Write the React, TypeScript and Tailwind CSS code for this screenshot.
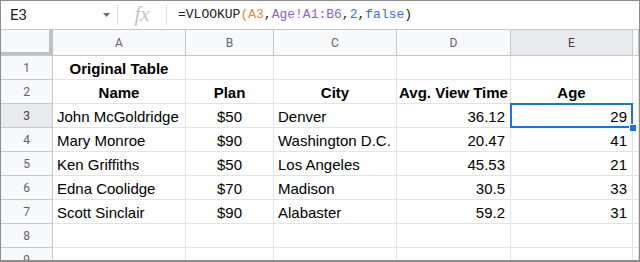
import React from "react";

const cols = [
  { key: "A", w: "w-[133px]" },
  { key: "B", w: "w-[88px]" },
  { key: "C", w: "w-[123px]" },
  { key: "D", w: "w-[114px]" },
  { key: "E", w: "w-[122px]" },
];

type Cell = { text: string; align?: "left" | "center" | "right"; bold?: boolean };

const rows: Cell[][] = [
  [{ text: "Original Table", align: "center", bold: true }, { text: "" }, { text: "" }, { text: "" }, { text: "" }],
  [
    { text: "Name", align: "center", bold: true },
    { text: "Plan", align: "center", bold: true },
    { text: "City", align: "center", bold: true },
    { text: "Avg. View Time", align: "center", bold: true },
    { text: "Age", align: "center", bold: true },
  ],
  [
    { text: "John McGoldridge" },
    { text: "$50", align: "center" },
    { text: "Denver" },
    { text: "36.12", align: "right" },
    { text: "29", align: "right" },
  ],
  [
    { text: "Mary Monroe" },
    { text: "$90", align: "center" },
    { text: "Washington D.C." },
    { text: "20.47", align: "right" },
    { text: "41", align: "right" },
  ],
  [
    { text: "Ken Griffiths" },
    { text: "$50", align: "center" },
    { text: "Los Angeles" },
    { text: "45.53", align: "right" },
    { text: "21", align: "right" },
  ],
  [
    { text: "Edna Coolidge" },
    { text: "$70", align: "center" },
    { text: "Madison" },
    { text: "30.5", align: "right" },
    { text: "33", align: "right" },
  ],
  [
    { text: "Scott Sinclair" },
    { text: "$90", align: "center" },
    { text: "Alabaster" },
    { text: "59.2", align: "right" },
    { text: "31", align: "right" },
  ],
  [{ text: "" }, { text: "" }, { text: "" }, { text: "" }, { text: "" }],
  [{ text: "" }, { text: "" }, { text: "" }, { text: "" }, { text: "" }],
];

function alignClass(a?: string) {
  if (a === "center") return "justify-center";
  if (a === "right") return "justify-end pr-[5px]";
  return "justify-start pl-[4px]";
}

export default function App() {
  return (
    <div className="w-[640px] h-[262px] overflow-hidden bg-white border border-[#8d8d8d] border-b-2 flex flex-col font-['Liberation_Sans',Arial,sans-serif]">
      {/* Formula bar */}
      <div className="h-[29px] shrink-0 flex items-center border-b border-[#c7c7c7] bg-white">
        <div className="w-[116px] flex items-center justify-between pl-[9px] pr-[7px]">
          <span className="font-['Roboto',sans-serif] text-[15px] text-[#202124]">E3</span>
          <svg width="7" height="4" viewBox="0 0 7 4">
            <path d="M0 0h7L3.5 4z" fill="#6b6b6b" />
          </svg>
        </div>
        <div className="w-px h-[20px] bg-[#dadce0]" />
        <div className="w-[48px] flex justify-center">
          <span className="font-['Liberation_Serif',serif] italic text-[21px] text-[#c4c4c4] leading-none -mt-[2px]">fx</span>
        </div>
        <div className="w-px h-[20px] bg-[#dadce0]" />
        <div className="pl-[11px] font-['Liberation_Mono',monospace] text-[13px] text-[#202124] whitespace-pre">
          =VLOOKUP<span className="text-[#e0892f]">(A3</span>,<span className="text-[#8e63b8]">Age!A1:B6</span>,
          <span className="text-[#3b6fd4]">2</span>,<span className="text-[#3b6fd4]">false</span>)
        </div>
      </div>

      {/* Column header row */}
      <div className="h-[26px] shrink-0 flex bg-[#f8f9fa] border-b border-[#c7c7c7]">
        <div className="w-[52px] shrink-0 bg-[#f8f9fa] border-r-[4px] border-r-[#c0c0c0] relative">
          <div className="absolute left-0 right-0 bottom-0 h-[3px] bg-[#c0c0c0]" />
        </div>
        {cols.map((c) => (
          <div
            key={c.key}
            className={`${c.w} shrink-0 flex items-center justify-center pt-px border-r border-[#c7c7c7] font-['Roboto',sans-serif] text-[12px] ${
              c.key === "E" ? "bg-[#e8eaed] text-[#3c4043]" : "text-[#5f6368]"
            }`}
          >
            {c.key}
          </div>
        ))}
        <div className="flex-1 border-r border-[#c7c7c7]" />
      </div>

      {/* Rows */}
      {rows.map((r, i) => (
        <div key={i} className={`h-[24px] shrink-0 flex border-b border-[#e2e3e3] relative ${i === 2 ? "z-10" : ""}`}>
          <div
            className={`w-[52px] shrink-0 flex items-center justify-center border-r border-r-[#c7c7c7] border-b border-b-[#c7c7c7] -mb-px font-['Roboto',sans-serif] text-[12px] ${
              i === 2 ? "bg-[#e8eaed] text-[#3c4043]" : "bg-[#f8f9fa] text-[#5f6368]"
            }`}
          >
            {i + 1}
          </div>
          {r.map((cell, j) => (
            <div
              key={j}
              className={`${cols[j].w} shrink-0 relative flex items-center pt-[3px] border-r border-[#e2e3e3] text-[15px] text-black whitespace-nowrap ${alignClass(
                cell.align
              )} ${cell.bold ? "font-bold" : ""}`}
            >
              {cell.text}
              {i === 2 && j === 4 && (
                <>
                  <div className="absolute -left-px -top-px -right-px -bottom-px border-2 border-[#1a73e8] pointer-events-none" />
                  <div className="absolute -right-[5px] -bottom-[5px] w-[8px] h-[8px] bg-[#1a73e8] border border-white z-20" />
                </>
              )}
            </div>
          ))}
          <div className="flex-1 border-r border-[#e2e3e3]" />
        </div>
      ))}
    </div>
  );
}
